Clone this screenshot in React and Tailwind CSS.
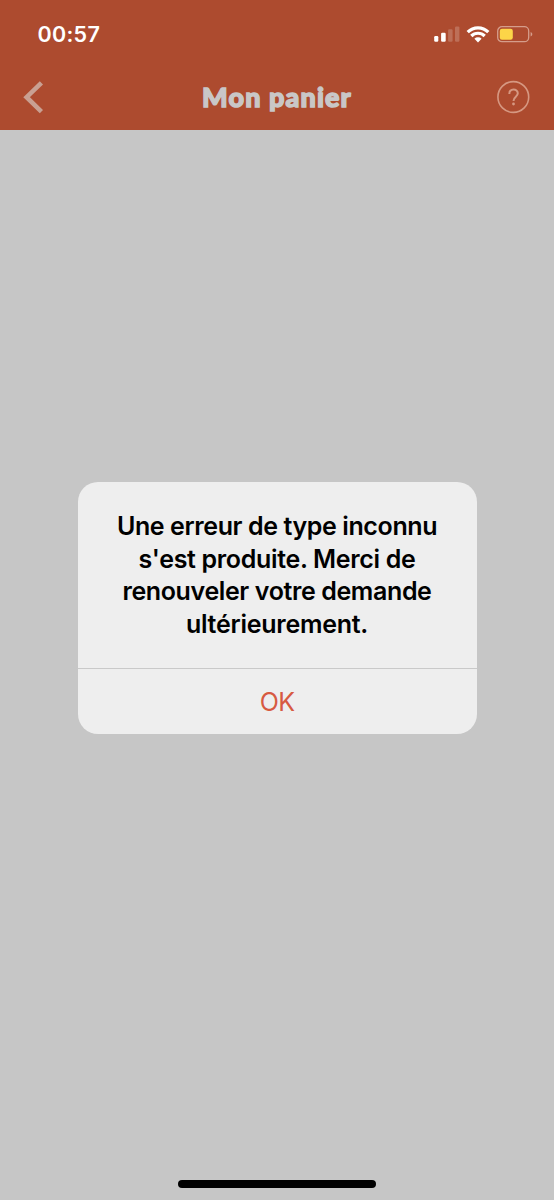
const messageLines = [
  { text: "Une erreur de type inconnu", className: "tracking-[-0.39px]" },
  { text: "s'est produite. Merci de", className: "tracking-[-0.33px]" },
  { text: "renouveler votre demande", className: "tracking-[-0.38px]" },
  { text: "ultérieurement.", className: "tracking-[-0.25px]" },
];

function SignalIcon() {
  return (
    <svg width="26" height="16" viewBox="0 0 26 16" fill="#fff">
      <rect x="0.2" y="10" width="4.1" height="5.8" rx="1.2" />
      <rect x="7.1" y="6.8" width="4.6" height="9" rx="1.2" />
      <rect x="14.1" y="3.2" width="4.5" height="12.6" rx="1.2" opacity="0.2" />
      <rect x="21" y="0.4" width="4.4" height="15.4" rx="1.2" opacity="0.2" />
    </svg>
  );
}

function WifiIcon() {
  return (
    <svg width="24" height="18" viewBox="0 0 24 18" fill="none" stroke="#fff" strokeWidth="3.2">
      <path d="M1.7 7.1a14.5 14.5 0 0 1 20.6 0" />
      <path d="M5.3 11a9.5 9.5 0 0 1 13.4 0" />
      <path d="M8.4 13.8a5.2 5.2 0 0 1 7.2 0L12 17.4z" fill="#fff" stroke="none" />
    </svg>
  );
}

function BatteryIcon() {
  return (
    <svg width="37" height="18" viewBox="0 0 37 18" fill="none">
      <rect x="1.7" y="1.7" width="31" height="15" rx="4.3" stroke="#d59d8b" strokeWidth="1.3" />
      <rect x="3.8" y="3.7" width="13" height="11" rx="2.2" fill="#fcd548" />
      <path d="M34.6 7v4.4c2.3-.8 2.3-3.6 0-4.4z" fill="#d59d8b" />
    </svg>
  );
}

function StatusBar() {
  return (
    <div className="flex h-[65px] items-start justify-between pl-[37.5px] pr-[21px]">
      <span className="pt-[21px] font-[Inter] text-[21.5px] font-semibold leading-[26px] tracking-[0.3px] text-white">
        00:57
      </span>
      <div className="flex items-center gap-[6px] pt-[25px]">
        <SignalIcon />
        <WifiIcon />
        <BatteryIcon />
      </div>
    </div>
  );
}

function NavBar() {
  return (
    <div className="grid h-[64px] grid-cols-[60px_1fr_60px] items-center">
      <button type="button" aria-label="Retour" className="pl-[22px]">
        <svg width="22" height="34" viewBox="0 0 22 34" fill="none" stroke="#c9a092" strokeWidth="4.6">
          <path d="M19.4 2.8 4.6 17.2l14.8 14.4" />
        </svg>
      </button>
      <h1 className="pb-px text-center font-[Lato] text-[27px] font-black leading-[34px] tracking-[1.1px] text-[#c9c7c7] [-webkit-text-stroke:1.4px_#c9c7c7]">
        Mon panier
      </h1>
      <button type="button" aria-label="Aide" className="pl-[3px]">
        <svg width="34" height="34" viewBox="0 0 34 34" fill="none" stroke="#d69882" strokeWidth="1.6">
          <circle cx="16.3" cy="17" r="15.4" />
          <path d="M12.3 13.9c0-5.9 8.5-5.7 8.5-.6 0 3.5-4.3 3.4-4.3 7.7" strokeWidth="2" />
          <circle cx="16.5" cy="24" r="1.4" fill="#d69882" stroke="none" />
        </svg>
      </button>
    </div>
  );
}

function AlertDialog() {
  return (
    <div role="alertdialog" className="flex h-[252px] w-[399px] flex-col overflow-hidden rounded-[20px] bg-[#eeeeee]">
      <div className="flex h-[187px] flex-col items-center border-b border-[#c9c9c9] pt-[28px] font-[Inter] text-[25px] font-semibold leading-[32.5px] text-black">
        {messageLines.map((line) => (
          <span key={line.text} className={`whitespace-nowrap ${line.className}`}>
            {line.text}
          </span>
        ))}
      </div>
      <button type="button" className="flex-1 pt-[3px] font-[Inter] text-[25px] font-normal tracking-[-0.8px] text-[#d75a41]">
        OK
      </button>
    </div>
  );
}

export default function App() {
  return (
    <div className="flex h-[1200px] w-[554px] flex-col overflow-hidden bg-[#c6c6c6]">
      <header className="h-[130px] shrink-0 bg-[#ad4b2f]">
        <StatusBar />
        <NavBar />
      </header>
      <main className="flex flex-1 flex-col items-center pt-[352px]">
        <AlertDialog />
      </main>
      <div className="flex justify-center pb-[12px]">
        <div className="h-[8px] w-[198px] rounded-full bg-black" />
      </div>
    </div>
  );
}
